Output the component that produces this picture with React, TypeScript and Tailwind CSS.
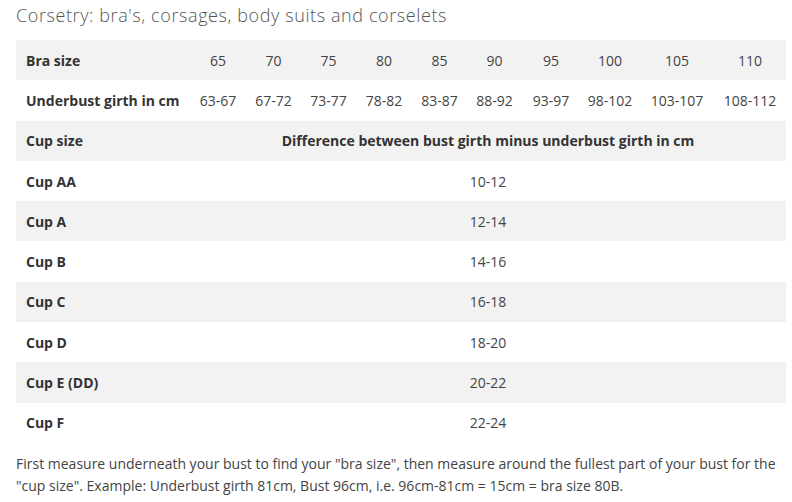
const sizes = ['65', '70', '75', '80', '85', '90', '95', '100', '105', '110'];
const girths = ['63-67', '67-72', '73-77', '78-82', '83-87', '88-92', '93-97', '98-102', '103-107', '108-112'];
const cups = [
  ['Cup AA', '10-12'],
  ['Cup A', '12-14'],
  ['Cup B', '14-16'],
  ['Cup C', '16-18'],
  ['Cup D', '18-20'],
  ['Cup E (DD)', '20-22'],
  ['Cup F', '22-24'],
];

export default function App() {
  return (
    <div className="w-[792px] h-[502px] bg-white px-4 overflow-hidden text-[#444] font-['Open_Sans',sans-serif]">
      <h2 className="pt-[2px] h-[40px] text-[18px] font-light tracking-[0.6px] text-[#555] leading-[26px]">
        Corsetry: bra's, corsages, body suits and corselets
      </h2>

      <table className="w-[770px] table-fixed border-collapse text-[14px]">
        <colgroup>
          <col className="w-[174px]" />
          <col className="w-[56px]" />
          <col className="w-[55px]" />
          <col className="w-[55px]" />
          <col className="w-[56px]" />
          <col className="w-[55px]" />
          <col className="w-[55px]" />
          <col className="w-[58px]" />
          <col className="w-[60px]" />
          <col className="w-[74px]" />
          <col className="w-[72px]" />
        </colgroup>
        <tbody>
          <tr className="h-[40.3px] bg-[#f2f2f2]">
            <td className="pl-[10px] font-bold text-[#333]">Bra size</td>
            {sizes.map((s) => (
              <td key={s} className="text-center">{s}</td>
            ))}
          </tr>
          <tr className="h-[40.3px]">
            <td className="pl-[10px] font-bold text-[#333] whitespace-nowrap">Underbust girth in cm</td>
            {girths.map((g) => (
              <td key={g} className="text-center whitespace-nowrap">{g}</td>
            ))}
          </tr>
          <tr className="h-[40.3px] bg-[#f2f2f2]">
            <td className="pl-[10px] font-bold text-[#333]">Cup size</td>
            <td colSpan={10} className="text-center font-bold text-[#333]">
              Difference between bust girth minus underbust girth in cm
            </td>
          </tr>
          {cups.map(([label, diff], i) => (
            <tr key={label} className={i % 2 === 1 ? 'h-[40.3px] bg-[#f2f2f2]' : 'h-[40.3px]'}>
              <td className="pl-[10px] font-bold text-[#333]">{label}</td>
              <td colSpan={10} className="text-center">{diff}</td>
            </tr>
          ))}
        </tbody>
      </table>

      <p className="mt-[10px] text-[14px] leading-[22px] text-[#444]">
        First measure underneath your bust to find your "bra size", then measure around the fullest part of your bust for the "cup size". Example: Underbust girth 81cm, Bust 96cm, i.e. 96cm-81cm = 15cm = bra size 80B.
      </p>
    </div>
  );
}
